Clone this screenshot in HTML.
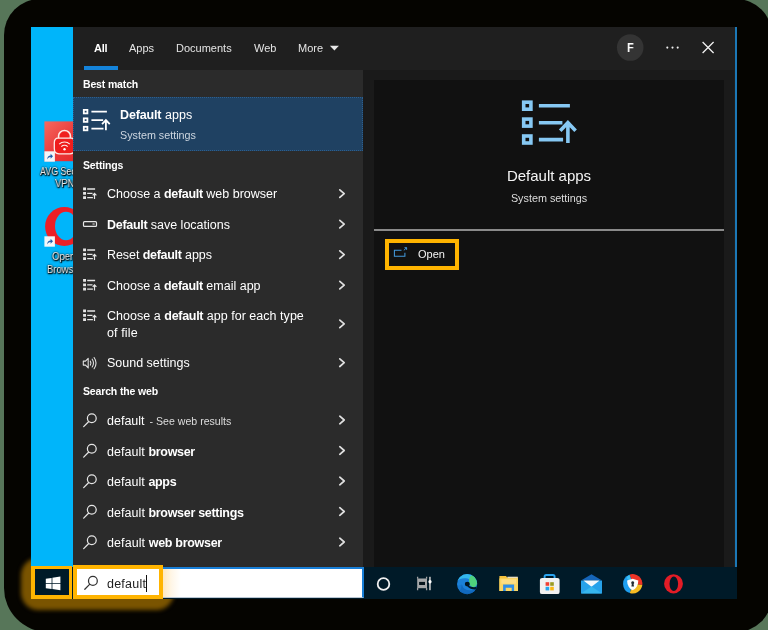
<!DOCTYPE html>
<html>
<head>
<meta charset="utf-8">
<title>Default apps search</title>
<style>
*{box-sizing:border-box;margin:0;padding:0}
html,body{width:768px;height:630px;overflow:hidden}
body{background:#577659;font-family:"Liberation Sans",sans-serif;position:relative;color:#fff}
.abs{position:absolute}
#shadow{left:4.300px;top:-1.500px;width:767.700px;height:633px;background:#050400;border-radius:36px 36px 36px 44px}
#glow{left:31px;top:566px;width:133px;height:33px;border-radius:8px;box-shadow:0 1.500px 4px 9.500px #7a5400}
#desk{left:31px;top:27px;width:42px;height:540px;background:#00b5fa;overflow:hidden}
#panel{left:73px;top:27px;width:662px;height:540px;background:#1f1f1f}
#edge{left:734.5px;top:27px;width:2.5px;height:540px;background:#1c78b6}
#left{left:73px;top:70px;width:290.300px;height:497px;background:#2b2b2b}
#rpane{left:363.300px;top:70px;width:371px;height:497px;background:#1a1a1a}
#best{left:73px;top:97px;width:290.300px;height:54.200px;background:#1f4162;outline:1px dotted rgba(56,120,180,0.550);outline-offset:-1.500px}
#card{left:373.700px;top:80px;width:350.800px;height:487px;background:#111}
#sep{left:373.700px;top:229px;width:350.300px;height:2px;background:#8a8a8a}
#taskbar{left:31px;top:567px;width:706px;height:31.700px;background:#001a28}
#searchbox{left:73px;top:567px;width:290.500px;height:31.200px;background:#fff;border-top:2.100px solid #187fd8;border-right:2.300px solid #187fd8;border-bottom:0.600px solid #b9c6d2}
.t{position:absolute;white-space:nowrap;line-height:1;will-change:transform}
.tab{font-size:11px;color:#e4e4e4;top:42.7px}
.hdr{font-size:10.5px;font-weight:bold;color:#fff;letter-spacing:-0.15px}
.row{font-size:12.5px;color:#fff}
.row b{font-weight:bold;letter-spacing:-0.3px}
.chev{position:absolute;left:338px;width:8px;height:12px}
.dl{font-size:10.500px;color:#ececec;transform:scaleX(0.845);transform-origin:0 0;text-shadow:0 1px 2px #000,0 0 2px #000,1px 1px 1px #000}
.hl{position:absolute;border:4px solid #ffb400}
</style>
</head>
<body>
<div id="shadow" class="abs"></div>
<div id="glow" class="abs"></div>
<div id="desk" class="abs"></div>
<div id="panel" class="abs"></div>
<div id="edge" class="abs"></div>
<div id="left" class="abs"></div>
<div id="rpane" class="abs"></div>
<div id="best" class="abs"></div>
<div id="card" class="abs"></div>
<div id="sep" class="abs"></div>
<div id="taskbar" class="abs"></div>
<div id="searchbox" class="abs"></div>

<div class="abs" style="left:31px;top:27px;width:42px;height:540px;overflow:hidden">
<div class="t dl" style="left:8.600px;top:138.500px">AVG Secure</div>
<div class="t dl" style="left:24.300px;top:151px;transform:scaleX(0.9)">VPN</div>
<div class="t dl" style="left:20.900px;top:223.800px;transform:scaleX(0.910)">Opera</div>
<div class="t dl" style="left:16.300px;top:236.600px;transform:scaleX(0.9)">Browser</div>
</div>
<!-- tabs -->
<div class="t tab" style="left:94px;font-weight:bold;color:#fff;letter-spacing:-0.200px">All</div>
<div class="t tab" style="left:129px">Apps</div>
<div class="t tab" style="left:176px">Documents</div>
<div class="t tab" style="left:254px">Web</div>
<div class="t tab" style="left:298px">More</div>
<div class="abs" style="left:84px;top:66.200px;width:34px;height:3.400px;background:#1483da"></div>

<!-- left list -->
<div class="t hdr" style="left:83px;top:79.400px">Best match</div>
<div class="t row" style="left:120px;top:108.700px;letter-spacing:0.100px"><b style="letter-spacing:-0.150px">Default</b> apps</div>
<div class="t" style="left:120.300px;top:129.700px;font-size:10.750px;color:#cdd6e0">System settings</div>
<div class="t hdr" style="left:83px;top:160.300px">Settings</div>
<div class="t row" style="left:106.7px;top:188.1px">Choose a <b>default</b> web browser</div>
<div class="t row" style="left:106.7px;top:218.700px"><b>Default</b> save locations</div>
<div class="t row" style="left:106.7px;top:249.1px;letter-spacing:-0.070px">Reset <b>default</b> apps</div>
<div class="t row" style="left:106.7px;top:279.800px">Choose a <b>default</b> email app</div>
<div class="t row" style="left:106.7px;top:310.1px;letter-spacing:0.034px">Choose a <b>default</b> app for each type</div>
<div class="t row" style="left:106.7px;top:327.1px;letter-spacing:0.120px">of file</div>
<div class="t row" style="left:106.7px;top:357.1px">Sound settings</div>
<div class="t hdr" style="left:83px;top:386.300px">Search the web</div>
<div class="t row" style="left:106.7px;top:415.1px">default <span style="font-size:10.6px;color:#ddd;margin-left:1.5px">- See web results</span></div>
<div class="t row" style="left:106.7px;top:446.1px;letter-spacing:0.050px">default <b>browser</b></div>
<div class="t row" style="left:106.7px;top:476.1px;letter-spacing:0.045px">default <b>apps</b></div>
<div class="t row" style="left:106.7px;top:507.1px;letter-spacing:0.056px">default <b>browser settings</b></div>
<div class="t row" style="left:106.7px;top:537.1px;letter-spacing:0.090px">default <b>web browser</b></div>


<svg class="abs" style="left:0;top:0" width="768" height="630" viewBox="0 0 768 630">
<defs>
  <!-- default apps glyph, native size 55 x 44.5 -->
  <g id="dapps" fill="none" stroke="currentColor" stroke-width="3.6">
    <rect x="1.8" y="1.8" width="7.2" height="7.0"/>
    <rect x="1.8" y="18.7" width="7.2" height="7.0"/>
    <rect x="1.8" y="35.6" width="7.2" height="7.0"/>
    <path d="M17 5.3H48M17 22.3H40.5M17 39.2H41.2M46 42.6V22.6M38.3 30.3L46 22.3L53.7 30.3"/>
  </g>
  <g id="dsmall" fill="none" stroke="currentColor">
    <path d="M0.2 1.5h2.9M0.2 6h2.9M0.2 10.3h2.9" stroke-width="2.8"/>
    <path d="M4.3 1.7H12.2M4.3 6H9.6M4.3 10.3H10" stroke-width="1.3"/>
    <path d="M11.6 11.6V6.2M9.8 8.1L11.6 6.1L13.5 8.1" stroke-width="1.2"/>
  </g>
  <g id="mag" fill="none" stroke="currentColor" stroke-width="1.25" stroke-linecap="round">
    <circle cx="8.9" cy="5.3" r="4.4"/>
    <path d="M5.6 8.8L0.8 13.7"/>
  </g>
  <path id="chev" d="M0.4 0.6L4.8 4.4L0.4 8.2" fill="none" stroke="#e0e0e0" stroke-width="1.700" stroke-linecap="round" stroke-linejoin="round"/>
</defs>

<!-- best match icon -->
<use href="#dapps" transform="translate(82.9 109) scale(0.5)" color="#fff"/>
<!-- big icon -->
<use href="#dapps" transform="translate(521.9 100.4)" color="#86c8f3"/>

<!-- settings rows icons -->
<g color="#e6e6e6">
<use href="#dsmall" transform="translate(82.9 187.3)"/>
<use href="#dsmall" transform="translate(82.9 248.3)"/>
<use href="#dsmall" transform="translate(82.9 278.8)"/>
<use href="#dsmall" transform="translate(82.9 309.3)"/>
</g>
<!-- drive -->
<rect x="83.5" y="221.7" width="13" height="4.7" rx="1" fill="none" stroke="#e6e6e6" stroke-width="1.2"/>
<path d="M92.5 224h2.2" stroke="#e6e6e6" stroke-width="1"/>
<!-- sound -->
<g fill="none" stroke="#e0e0e0" stroke-width="1.1" stroke-linejoin="round">
<path d="M83.300 361.100h2.200l2.700-2.800v9.600l-2.700-2.800h-2.200z"/>
<path d="M90.300 361.100q1.300 2 0 4M92.200 359.200q2.600 3.900 0 7.800M94.100 357.500q3.900 5.600 0 11.200" stroke-linecap="round"/>
</g>
<!-- magnifiers -->
<g color="#e6e6e6">
<use href="#mag" transform="translate(82.9 412.9)"/>
<use href="#mag" transform="translate(82.9 443.4)"/>
<use href="#mag" transform="translate(82.9 473.9)"/>
<use href="#mag" transform="translate(82.9 504.4)"/>
<use href="#mag" transform="translate(82.9 534.9)"/>
</g>
<use href="#mag" transform="translate(84 575.6)" color="#333"/>
<!-- chevrons -->
<use href="#chev" transform="translate(339.4 189.2)"/>
<use href="#chev" transform="translate(339.4 219.7)"/>
<use href="#chev" transform="translate(339.4 250.2)"/>
<use href="#chev" transform="translate(339.4 280.7)"/>
<use href="#chev" transform="translate(339.4 319.5)"/>
<use href="#chev" transform="translate(339.4 358.3)"/>
<use href="#chev" transform="translate(339.4 415.6)"/>
<use href="#chev" transform="translate(339.4 446.1)"/>
<use href="#chev" transform="translate(339.4 476.6)"/>
<use href="#chev" transform="translate(339.4 507.1)"/>
<use href="#chev" transform="translate(339.4 537.6)"/>
<!-- More arrow -->
<path d="M329.900 45.700h9l-4.500 4.900z" fill="#e8e8e8"/>
<!-- top-right controls -->
<circle cx="630.2" cy="47.5" r="13.3" fill="#343434"/>
<g fill="#f0f0f0"><circle cx="667.3" cy="47.6" r="1.050"/><circle cx="672.5" cy="47.6" r="1.050"/><circle cx="677.7" cy="47.6" r="1.050"/></g>
<path d="M702.6 42L713.6 53M713.6 42L702.6 53" stroke="#f0f0f0" stroke-width="1.3" fill="none"/>
<!-- open icon -->
<path d="M401.500 250.300H394.400V256.300H404.900V252.700" fill="none" stroke="#4399dc" stroke-width="1.050"/>
<path d="M403.8 250.400L406.500 247.800M404.500 247.700h2.100v2.100" fill="none" stroke="#4399dc" stroke-width="1"/>
</svg>


<!-- taskbar + desktop icons -->
<svg class="abs" style="left:0;top:0" width="768" height="630" viewBox="0 0 768 630">
<defs>
  <linearGradient id="avgG" x1="0" y1="0" x2="1" y2="1"><stop offset="0" stop-color="#f4695f"/><stop offset="0.5" stop-color="#ec3a3a"/><stop offset="1" stop-color="#e32428"/></linearGradient>
  <linearGradient id="edgeG" x1="0" y1="0" x2="1" y2="1"><stop offset="0" stop-color="#2fb8e8"/><stop offset="1" stop-color="#1a5fb8"/></linearGradient>
  <clipPath id="deskclip"><rect x="31" y="27" width="42" height="541"/></clipPath>
  <g id="shortcut"><rect x="0" y="0" width="10.500" height="10.400" fill="#f4f6f8"/><path d="M2.6 8.2C2.8 5.6 4.2 4.2 6.2 4.1V2.4L8.6 5L6.2 7.4V5.8C4.6 5.9 3.5 6.7 2.6 8.2z" fill="#1f5fae"/></g>
</defs>
<g clip-path="url(#deskclip)">
  <!-- AVG Secure VPN -->
  <rect x="44.4" y="121.4" width="40" height="39.8" fill="url(#avgG)"/>
  <g fill="none" stroke="#fdeae6" stroke-width="1.300">
    <path d="M58.600 138.300V135.800a5.900 5.300 0 0 1 11.800 0V138.300" stroke-width="1.600" fill="#f0201e"/>
    <path d="M58 138.100H71C73.600 138.100 74.800 140 74.800 143V148.500C74.800 151.800 73 153.800 70 153.800H59C56 153.800 54.300 151.800 54.300 148.500V143C54.300 140 55.400 138.100 58 138.100z" fill="#ef1d1c"/>
    <path d="M59.200 144.200a7.500 7.500 0 0 1 10.600 0M61.300 146.600a4.600 4.600 0 0 1 6.400 0" stroke-width="1.150"/>
  </g>
  <circle cx="64.500" cy="149.200" r="1.200" fill="#fff"/>
  <use href="#shortcut" transform="translate(44.4 151.3)"/>
  <!-- Opera desktop -->
  <ellipse cx="64.300" cy="226.500" rx="19.200" ry="19.500" fill="#ec1f26"/>
  <ellipse cx="66" cy="226" rx="11" ry="14.300" fill="#00b5fa"/>
  <use href="#shortcut" transform="translate(44.4 236.3)"/>
</g>

<!-- windows logo -->
<g fill="#fff">
<path d="M45.800 578.700l5.800-0.800v5.200h-5.800zM52.400 577.800l8-1.200v6.500h-8zM45.800 583.800h5.800v5.200l-5.800-0.800zM52.400 583.800h8v6.500l-8-1.200z"/>
</g>
<!-- cortana -->
<circle cx="383.5" cy="584" r="5.8" fill="none" stroke="#f0f0f0" stroke-width="1.8"/>
<!-- task view -->
<rect x="417.200" y="578.500" width="9.800" height="9.700" fill="#a6a8aa"/>
<rect x="419.100" y="581.900" width="5.900" height="3.100" fill="#06141c"/>
<path d="M417.600 576.800v2M426.600 576.800v2M417.600 588v2.200M426.600 588v2.200" stroke="#a0a2a4" stroke-width="1.300" fill="none"/>
<rect x="429.200" y="576.800" width="1.500" height="13.400" fill="#cfcfcf"/>
<ellipse cx="430" cy="581.800" rx="1.600" ry="1.700" fill="#ffffff"/>
<!-- edge -->
<clipPath id="edgeclip"><circle cx="467.100" cy="584.100" r="10.100"/></clipPath>
<g clip-path="url(#edgeclip)">
<rect x="456" y="573" width="23" height="23" fill="#1b80d8"/>
<path d="M455 585.500C456.500 578.800 462 577.600 467.500 578.600C470.800 579.300 472.300 581.200 472.600 584H480V570H455z" fill="#33b8ec"/>
<ellipse cx="473.300" cy="581" rx="4.200" ry="6.200" fill="#4fd27c"/>
<path d="M462 584.600C462.600 589.800 468.500 592.300 476.500 589.200L478 592L470 597H458z" fill="#0f63b6"/>
<path d="M462 584.600C462.600 589.800 468.500 592.300 476.500 589.200C470 596 459.500 594 457.500 586z" fill="#1470c6" opacity="0.550"/>
<ellipse cx="467.300" cy="584.100" rx="2.500" ry="2.300" fill="#011420"/>
<path d="M468.500 585.600C471 587.400 474.500 587.600 478 586.600V589C474 590.200 470 589.200 467.500 586.500z" fill="#011826"/>
</g>
<!-- explorer -->
<path d="M499.400 576h6.600l1.200 1.400h10.800v13.600h-18.600z" fill="#f5c13c"/>
<rect x="507.400" y="576.700" width="10.400" height="1.600" fill="#e6dcc0"/>
<rect x="499.400" y="578.400" width="18.600" height="12.600" fill="#fbd663"/>
<rect x="501.400" y="579.300" width="14.600" height="4.400" fill="#fde08c" opacity="0.800"/>
<path d="M503.100 591v-6.600h11v6.600h-2.400v-3.300h-6v3.300z" fill="#2f8fe6"/>
<!-- store -->
<path d="M544.600 579v-2.400a1.600 1.600 0 0 1 1.600-1.600h6.800a1.600 1.600 0 0 1 1.600 1.600V579" fill="none" stroke="#2aa4f0" stroke-width="1.900"/>
<rect x="539.900" y="577.900" width="19.700" height="16.200" rx="2.200" fill="#f1f1f1"/>
<rect x="545.600" y="582.200" width="3.600" height="3.600" fill="#ef4034"/><rect x="550.200" y="582.200" width="3.600" height="3.600" fill="#9a9a20"/>
<rect x="545.600" y="586.800" width="3.600" height="3.600" fill="#24a6ee"/><rect x="550.200" y="586.800" width="3.600" height="3.600" fill="#fbb813"/>
<!-- mail -->
<path d="M581 580.600l10.500-6.400 10.500 6.400z" fill="#1565b8"/>
<rect x="581" y="580.600" width="21" height="12.800" fill="#27a2ea"/>
<path d="M583.400 580.600h16.200l-8.100 6.200z" fill="#f4f8fc"/>
<path d="M581 593.400l10.500-7 10.500 7z" fill="#36b6ee"/>
<!-- avg browser -->
<path d="M632.700 583.800L629.400 574.700A9.700 9.700 0 0 1 642.300 585.100z" fill="#ee3326"/>
<path d="M632.700 583.800L642.300 585.100A9.700 9.700 0 0 1 629.700 593z" fill="#f6bb22"/>
<path d="M632.700 583.800L629.700 593A9.700 9.700 0 0 1 629.400 574.700z" fill="#1f9ff0"/>
<path d="M626.500 578.300A9.700 9.700 0 0 1 629.400 574.700L632.700 583.800z" fill="#3cc0f4"/>
<path d="M632.700 578.700l5.600 1.700c0 4.700-2 8-5.600 9.800-3.600-1.800-5.600-5.100-5.600-9.800z" fill="#fdfdfd"/>
<path d="M632.700 581.300a1.500 1.500 0 0 1 .9 2.700l.4 2.500h-2.600l.4-2.500a1.500 1.500 0 0 1 .9-2.700z" fill="#232a33"/>
<!-- opera taskbar -->
<ellipse cx="673.500" cy="583.800" rx="9.400" ry="9.600" fill="#e31c26"/>
<ellipse cx="673.800" cy="583.800" rx="4.300" ry="7.300" fill="#001a28"/>
</svg>

<!-- right pane -->
<div class="t" style="left:374.300px;width:350px;text-align:center;top:168.300px;font-size:15px;color:#f4f4f4">Default apps</div>
<div class="t" style="left:374.300px;width:350px;text-align:center;top:192.600px;font-size:10.800px;color:#ddd">System settings</div>
<div class="t" style="left:417.800px;top:249.300px;font-size:11px;color:#f4f4f4">Open</div>
<div class="hl" style="left:385px;top:238.700px;width:73.800px;height:31px;border-width:4.100px"></div>

<div class="t" style="left:627.3px;top:42.3px;font-size:12px;font-weight:bold;color:#fff;transform:scaleX(0.92);transform-origin:0 0">F</div>
<div class="abs" style="left:145.700px;top:575.200px;width:1.200px;height:16.500px;background:#111"></div>
<div class="abs" style="left:163.400px;top:568.700px;width:18px;height:28.600px;background:linear-gradient(to right,rgba(255,176,40,0.300),rgba(255,176,40,0.100) 50%,rgba(255,176,40,0))"></div>
<!-- taskbar -->
<div class="t" style="left:107.200px;top:578.400px;font-size:12.500px;color:#1c1c1c;letter-spacing:0.220px">default</div>
<div class="hl" style="left:31.400px;top:566px;width:40.600px;height:32.900px;border-width:3.700px 3.600px 4.500px 4px"></div>
<div class="hl" style="left:73.200px;top:564.800px;width:90.100px;height:34.100px;border-width:4.900px 4px 4.500px 4px"></div>
</body>
</html>
